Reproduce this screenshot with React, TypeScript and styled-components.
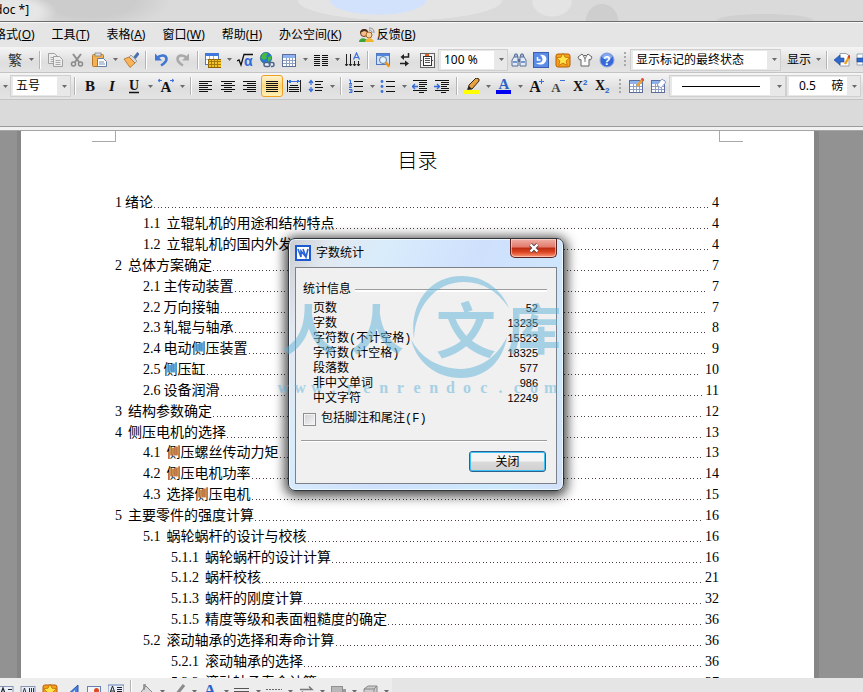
import React from 'react';
import styled, { createGlobalStyle } from 'styled-components';

const UI = '"Noto Sans", "Noto Sans CJK SC", sans-serif';
const DIALOG = '"Liberation Mono", "Noto Sans CJK SC", monospace';
const SERIF = '"Liberation Serif", "Noto Sans CJK SC", serif';

const GlobalStyle = createGlobalStyle`
  * { box-sizing: border-box; }
  body { margin: 0; overflow: hidden; background: #929292; }
  button, input, select { font: inherit; color: inherit; margin: 0; }
`;

const Shell = styled.div`
  display: flex;
  flex-direction: column;
  height: 100vh;
  overflow: hidden;
  font-family: ${UI};
  font-size: 12px;
  color: #000;
  background: #e5e5e5;
`;

const TitleBar = styled.header`
  flex: none;
  height: 22px;
  line-height: 20px;
  border-bottom: 1px solid #6c6c6c;
  white-space: nowrap;
  background:
    radial-gradient(ellipse 45px 18px at 12px 12px, #e6e6e6 60%, transparent 100%),
    radial-gradient(ellipse 56px 17px at 378px 0, #d2e2fd 84%, transparent 88%),
    radial-gradient(ellipse 110px 22px at 400px 0, #e4e4e4 92%, transparent 94%),
    radial-gradient(ellipse 24px 20px at 552px 0, #e4e4e4 80%, transparent 86%),
    radial-gradient(ellipse 20px 22px at 602px 22px, #cecece 80%, transparent 84%),
    radial-gradient(ellipse 56px 7px at 765px 20px, #d0d0d0 80%, transparent 90%),
    radial-gradient(ellipse 90px 34px at 90px 0, #cccccc 50%, transparent 90%),
    #dadada;
`;

const WindowTitle = styled.span`
  margin-left: -5px;
`;

const MenuBar = styled.nav`
  flex: none;
  display: flex;
  align-items: center;
  gap: 17px;
  height: 25px;
  margin-left: -6px;
  border-top: 1px solid #f8f8f8;
  background: #e5e5e5;
`;

const MenuItem = styled.button`
  display: flex;
  align-items: center;
  gap: 2px;
  padding: 0;
  border: 0;
  background: none;
  line-height: 20px;
  white-space: nowrap;
`;

const Bar = styled.div`
  flex: none;
  display: flex;
  align-items: center;
  height: 27px;
  overflow: hidden;
  border-bottom: 1px solid #c4c4c4;
  background: linear-gradient(#f5f5f5, #eaeaea 30%, #dedede 60%, #e4e4e4);
`;

const StandardBar = styled(Bar)`
  height: 26px;
  padding-left: 4px;
`;

const IconButton = styled.button<{ $on?: boolean }>`
  flex: none;
  display: flex;
  align-items: center;
  justify-content: center;
  width: 22px;
  height: 22px;
  padding: 0;
  border: ${(p) => (p.$on ? '1px solid #f0a020' : '0')};
  border-radius: 3px;
  background: ${(p) => (p.$on ? 'linear-gradient(#fff3d0, #fbd77c 50%, #fff0b8)' : 'none')};
`;

const ArrowButton = styled.button`
  flex: none;
  display: flex;
  align-items: center;
  justify-content: center;
  width: 10px;
  height: 22px;
  padding: 0;
  border: 0;
  background: none;
`;

const Separator = styled.span`
  flex: none;
  width: 2px;
  height: 18px;
  margin: 0 3px;
  border-left: 1px solid #b4b4b4;
  border-right: 1px solid #fff;
`;

const Grip = styled.span`
  flex: none;
  width: 2px;
  height: 15px;
  margin: 0 4px 0 6px;
  background: repeating-linear-gradient(#a8a8a8 0 2px, transparent 2px 4px);
`;

const ComboFrame = styled.label<{ $width: number }>`
  flex: none;
  display: flex;
  align-items: center;
  justify-content: space-between;
  width: ${(p) => p.$width}px;
  height: 22px;
  padding: 0 1px 0 2px;
  border: 1px solid #cfcfcf;
  background: #e8e8e8;
`;

const ComboSelect = styled.select`
  flex: 1;
  min-width: 0;
  height: 18px;
  margin-right: 2px;
  padding: 0 0 0 3px;
  border: 0;
  border-radius: 0;
  appearance: none;
  background: #fff;
  line-height: 18px;
  outline: 0;
`;

const WidthSelect = styled(ComboSelect)`
  padding-left: 10px;
`;

const LineSample = styled.button`
  flex: 1;
  display: flex;
  align-items: center;
  height: 18px;
  margin-right: 4px;
  padding: 0 10px;
  border: 0;
  background: #fff;

  &::before {
    content: '';
    flex: 1;
    height: 1px;
    background: #000;
  }
`;

const TextButton = styled.button`
  flex: none;
  height: 22px;
  padding: 0 2px 0 6px;
  border: 0;
  background: none;
  line-height: 22px;
`;

const Ribbon = styled.div`
  flex: none;
  height: 31px;
  border-bottom: 1px solid #a4a4a4;
  background: linear-gradient(#dadada 26px, #9b9b9b 26px 27px, #f2f2f2 27px);
`;

const Workspace = styled.main`
  flex: 1;
  min-height: 0;
  overflow: hidden;
  background: #929292;
`;

const Page = styled.article`
  min-height: 100%;
  margin: 0 49px 0 21px;
  background: #fff;
  box-shadow: 5px 0 #868686, -4px 0 #868686;
  font-family: ${SERIF};
`;

const MarginMarks = styled.div`
  display: flex;
  justify-content: space-between;
  padding: 0 71px;
`;

const Mark = styled.span<{ $side: 'left' | 'right' }>`
  width: 24px;
  height: 11px;
  border-bottom: 1px solid #a9a9a9;
  border-${(p) => (p.$side === 'left' ? 'right' : 'left')}: 1px solid #a9a9a9;
`;

const Heading = styled.h1`
  margin: 4px 0 17px;
  font-size: 20px;
  font-weight: 300;
  line-height: 30px;
  text-align: center;
`;

const Contents = styled.ol`
  display: grid;
  min-height: 500px;
  margin: 0;
  padding: 0 95px 0 94px;
  list-style: none;
  font-size: 14px;
  line-height: 20px;
`;

const Entry = styled.li<{ $level: number }>`
  display: flex;
  align-items: center;
  padding-left: ${(p) => p.$level * 28}px;
  white-space: nowrap;
`;

const EntryNumber = styled.span<{ $tight?: boolean }>`
  margin-right: ${(p) => (p.$tight ? 3 : 6)}px;
`;

const Leader = styled.span`
  flex: 1;
  height: 1px;
  margin: 9px 4px 0 1px;
  background: repeating-linear-gradient(90deg, #4a3a44 0 1px, transparent 1px 4px, #4a3a44 4px 5px, transparent 5px 7px);
`;

const DrawingBar = styled.footer`
  flex: none;
  display: flex;
  align-items: flex-start;
  height: 14px;
  padding-top: 2px;
  overflow: hidden;
  background: linear-gradient(90deg, #ededed 392px, #e5e5e5 392px);
`;

const DrawingTools = styled.div`
  display: flex;
  margin-left: -5px;
`;

const Dialog = styled.section`
  position: absolute;
  left: 288px;
  top: 238px;
  width: 276px;
  padding: 0 6px 6px;
  border: 1px solid #30363c;
  border-radius: 7px;
  background: linear-gradient(115deg, #c9cdd2 0, #e2e8f0 40px, #d9ecfb 90px, #cfe0fd 180px, #cdeafd 300px, #d4e0fb);
  box-shadow: inset 0 0 0 1px #eef8ff, 0 2px 12px 3px rgba(0, 0, 0, 0.75);
  font-family: ${DIALOG};
`;

const DialogTitle = styled.header`
  display: flex;
  align-items: flex-start;
  height: 28px;
`;

const DialogName = styled.h2`
  flex: 1;
  margin: 0;
  padding: 4px 0 0 5px;
  font-family: ${UI};
  font-size: 12px;
  font-weight: 400;
  line-height: 20px;
`;

const LogoBox = styled.span`
  display: flex;
  padding-top: 6px;
`;

const CloseX = styled.button`
  display: flex;
  align-items: center;
  justify-content: center;
  width: 47px;
  height: 19px;
  padding: 0;
  border: 1px solid #5c2420;
  border-top: 0;
  border-radius: 0 0 5px 5px;
  background: linear-gradient(#f0b0a6, #e27a6c 45%, #bb2c12 50%, #dc4420 72%, #fb9a7c);
  box-shadow: inset 0 0 0 1px rgba(255, 220, 210, 0.6);
`;

const DialogBody = styled.div`
  height: 217px;
  padding: 13px 9px 0 5px;
  border: 1px solid #7d8187;
  background: #f0f0f0;
`;

const GroupTitle = styled.div`
  display: flex;
  align-items: center;
  gap: 4px;
  padding-left: 2px;
  line-height: 18px;

  &::after {
    content: '';
    flex: 1;
    height: 2px;
    border-top: 1px solid #9c9c9c;
    background: #fff;
  }
`;

const Stats = styled.dl`
  margin: 3px 0 0;
  padding: 0 9px 0 12px;
`;

const Stat = styled.div`
  display: flex;
  justify-content: space-between;
  height: 15px;
  line-height: 15px;
`;

const StatValue = styled.dd`
  margin: 0;
  font-family: "Liberation Sans", sans-serif;
  font-size: 11px;
  line-height: 13px;
`;

const CheckRow = styled.label`
  display: flex;
  align-items: center;
  gap: 5px;
  margin-top: 3px;
  padding-left: 2px;
  line-height: 18px;
`;

const CheckBox = styled.input`
  width: 13px;
  height: 13px;
  border: 1px solid #8e8f8f;
  appearance: none;
  background: linear-gradient(135deg, #cdd0d2, #f6f6f6);
  box-shadow: inset 0 0 0 1px #f4f4f4;
`;

const DialogFooter = styled.div`
  display: flex;
  justify-content: flex-end;
  margin-top: 12px;
  padding: 10px 1px 0 0;
  border-top: 1px solid #9c9c9c;
  box-shadow: inset 0 1px #fff;
`;

const PushButton = styled.button`
  display: flex;
  align-items: center;
  justify-content: center;
  width: 77px;
  height: 21px;
  padding: 0;
  border: 1px solid #2c628b;
  border-radius: 3px;
  background: linear-gradient(#f4f4f4 48%, #dadada 52%, #d0d0d0);
  box-shadow: inset 0 0 0 1px #3fc1f5;
  font-family: ${UI};
  line-height: 20px;
`;

const Watermark = styled.div`
  position: absolute;
  left: -14px;
  top: 36px;
  width: 284px;
  color: #5fb3da;
  opacity: 0.5;
  pointer-events: none;
`;

const Brand = styled.div`
  display: grid;
  grid-template-columns: 68px 68px 98px 50px;
  align-items: center;
  justify-items: center;
  height: 104px;
  font-family: "Noto Sans CJK SC", sans-serif;
  font-weight: 700;
`;

const BrandMark = styled.span<{ $size: number }>`
  font-size: ${(p) => p.$size}px;
  line-height: 60px;
`;

const Emblem = styled.span`
  display: grid;
  align-items: center;
  justify-items: center;

  & > * {
    grid-area: 1 / 1;
  }

  & > span {
    padding-left: 12px;
  }
`;

const Site = styled.div`
  display: grid;
  grid-template-columns: repeat(17, 1fr);
  font-family: "Liberation Serif", serif;
  font-size: 16px;
  font-weight: 700;
  line-height: 18px;
  text-align: center;
`;

/* ---------- drawings ---------- */

const Svg = ({ children, crisp, w = 16 }: { children: React.ReactNode; crisp?: boolean; w?: number }) => (
  <svg width={w} height={16} viewBox={`0 0 ${w} 16`} fill="none" aria-hidden="true" shapeRendering={crisp ? 'crispEdges' : undefined}>
    {children}
  </svg>
);

const Caret = () => (
  <svg width="5" height="3" viewBox="0 0 5 3" aria-hidden="true">
    <path d="M0 0h5L2.5 3z" fill="#6a6a6a" />
  </svg>
);

const Lines = ({ rows, color = '#111' }: { rows: number[][]; color?: string }) => (
  <>{rows.map(([x, y, n], i) => <rect key={i} x={x} y={y} width={n} height={1} fill={color} />)}</>
);

const Align = ({ rows }: { rows: number[][] }) => <Svg crisp><Lines rows={rows} /></Svg>;

const Sheet = ({ x, y }: { x: number; y: number }) => (
  <g>
    <path d={`M${x} ${y}h6l3 3v7h-9z`} fill="#eee" stroke="#a0a0a0" />
    <path d={`M${x + 2} ${y + 4}h5M${x + 2} ${y + 6}h5M${x + 2} ${y + 8}h5`} stroke="#a8a8a8" />
  </g>
);

const TableGrid = () => (
  <g>
    <rect x="1.5" y="2.5" width="13" height="12" fill="#fff" stroke="#5c6f9c" />
    <rect x="2" y="3" width="12" height="3" fill="#8db2f0" />
    <path d="M2 8.5h12M2 11.5h12M5.5 6v8M8.5 6v8M11.5 6v8" stroke="#8fa0c0" />
  </g>
);

const Star = () => (
  <Svg>
    <rect x="1" y="2" width="14" height="13" rx="2" fill="#f4a11c" stroke="#b85c08" />
    <path d="M8 1l2 4.2 4.5.5-3.3 3.1 1 4.6L8 11.1l-4.2 2.3 1-4.6L1.5 5.7 6 5.2z" fill="#ffe34a" stroke="#c46a0a" strokeWidth=".8" />
  </Svg>
);

const Globe = () => (
  <Svg>
    <circle cx="7" cy="6" r="5.7" fill="#2878d8" stroke="#155" strokeWidth=".5" />
    <path d="M3 3c2-3 5-2 6-1L7 4l1 2-3 2-3-2zM9 5l3-1v3l-3 3z" fill="#45bd3c" />
    <path d="M5 12.5a2 2 0 0 1 2-2h2a2 2 0 0 1 0 4H7a2 2 0 0 1-2-2zM10 12.5a2 2 0 0 1 2-2h1a2 2 0 0 1 0 4h-1" stroke="#4f6787" strokeWidth="1.5" fill="#eef" />
  </Svg>
);

const Undo = ({ color, flip }: { color: string; flip?: boolean }) => (
  <Svg>
    <g transform={flip ? 'matrix(-1 0 0 1 16 0)' : undefined}>
      <path d="M4 6c4-4 9.500-3 9.500 1 0 3-3 5-5.500 6.500" stroke={color} strokeWidth="2.6" />
      <path d="M2 1.500v7h7z" fill={color} />
    </g>
  </Svg>
);

const Letter = ({ t, x = 8, y = 13, size = 15, color = '#111', italic, bold = true }: {
  t: string; x?: number; y?: number; size?: number; color?: string; italic?: boolean; bold?: boolean;
}) => (
  <text x={x} y={y} textAnchor="middle" fontFamily="Liberation Serif, serif" fontSize={size} fontWeight={bold ? 700 : 400}
    fontStyle={italic ? 'italic' : undefined} fill={color}>{t}</text>
);

const full = [3, 5, 7, 9, 11, 13];

const indentRows = [[1, 2, 14], [7, 4, 8], [7, 6, 8], [7, 8, 6], [7, 10, 8], [1, 12, 14], [7, 14, 5]];

const icons: Record<string, React.ReactNode> = {
  繁体: <Svg><text x="8" y="13" textAnchor="middle" fontFamily="Noto Sans CJK SC" fontSize="14" fill="#333">繁</text></Svg>,
  复制: <Svg><Sheet x={1.5} y={1.5} /><Sheet x={6.5} y={4.5} /></Svg>,
  剪切: <Svg><path d="M4 2l6 8M12 2l-6 8" stroke="#8e8e8e" strokeWidth="2" /><circle cx="4.500" cy="12" r="2" stroke="#8a8a8a" strokeWidth="1.500" /><circle cx="11.500" cy="12" r="2" stroke="#8a8a8a" strokeWidth="1.500" /></Svg>,
  粘贴: <Svg><rect x="1.500" y="2.500" width="11" height="12" rx="1" fill="#f4b254" stroke="#b87826" /><rect x="4" y="1" width="6" height="3" fill="#ddd" stroke="#777" strokeWidth=".7" /><path d="M6.500 6.500h6l3 3v5h-9z" fill="#fff" stroke="#6880a0" /><path d="M8 10h5M8 12h6" stroke="#7890b8" /></Svg>,
  格式刷: <Svg><path d="M15.500 1l-4 5" stroke="#4a6fae" strokeWidth="3" /><path d="M8 3l6 6-2 2-6-6z" fill="#d8d8d8" stroke="#888" strokeWidth=".7" /><path d="M6 5l6 6-5 4.500L1 7z" fill="#f7b45a" stroke="#a96320" strokeWidth=".7" /></Svg>,
  撤消: <Undo color="#3f77d2" />,
  恢复: <Undo color="#a9a9a9" flip />,
  表格和边框: <Svg crisp><rect x="0" y="1" width="13" height="11" fill="#fff" stroke="#4c7bd0" /><rect x="0" y="1" width="13" height="3" fill="#3f78dd" /><path d="M1 7.500h11M4.500 4v8M8.500 4v8" stroke="#9ab5e6" /><rect x="3" y="7" width="13" height="8" fill="#f2c230" stroke="#8a6200" /><path d="M3 9.500h13M3 12.500h13M6.500 7v8M9.500 7v8M12.500 7v8" stroke="#a67c08" /></Svg>,
  公式: <Svg><path d="M0 9l2-1 2 5L7 2.500h9" stroke="#111" strokeWidth="1.300" /><text x="7" y="14" fontFamily="Liberation Sans" fontSize="14" fontWeight="700" fill="#2c6bdc">α</text></Svg>,
  超链接: <Globe />,
  表格: <Svg crisp><TableGrid /></Svg>,
  分栏: <Svg crisp><Lines rows={[3, 5, 7, 9, 11, 13].flatMap((y) => [[1, y, 6], [9, y, 6]])} /></Svg>,
  文字方向: <Svg><path d="M1.500 2v12M5.500 2v12M9.500 9v5M13.500 9v5M0 12l1.500 2L3 12M4 12l1.500 2L7 12M8 12l1.500 2 1.500-2M12 12l1.500 2 1.500-2" stroke="#222" /><path d="M8.500 7.500L11.500 1l3 6.500M10 5.500h3.500" stroke="#3b70dc" strokeWidth="1.200" /></Svg>,
  显示比例: <Svg><rect x="1.500" y="1.500" width="13" height="11" fill="#cfe0fa" stroke="#5079c0" /><rect x="2" y="2" width="12" height="2" fill="#5487dc" /><circle cx="8" cy="8" r="3.500" fill="#e4f4ff" stroke="#60809c" /><path d="M10.500 10.500l4 4" stroke="#ec951c" strokeWidth="2.500" /></Svg>,
  段落标记: <Svg><path d="M11.500 1v4H5" stroke="#222" strokeWidth="1.500" /><path d="M7 2v6L3.500 5z" fill="#222" /><path d="M3 11.500h6" stroke="#222" strokeWidth="1.500" /><path d="M8 8.500v6l4-3z" fill="#222" /></Svg>,
  页面设置: <Svg crisp><rect x="1" y="1" width="14" height="14" fill="#f0f0f0" stroke="#666" /><rect x="4" y="4" width="8" height="9" fill="#fff" stroke="#333" /><path d="M6 6.500h5M6 8.500h5M6 10.500h5M2 8h1M13 8h1" stroke="#555" /><path d="M6 2.500h4" stroke="#e45c20" strokeWidth="2" /></Svg>,
  查找: <Svg><path d="M3 5l1-3h2l1 3M9 5l1-3h2l1 3" fill="#9cb7e6" stroke="#5a6f92" /><path d="M1 14V8l2-3h4v9zM15 14V8l-2-3H9v9z" fill="#e3ebf8" stroke="#5a6f92" /><path d="M7 7h2v3H7z" fill="#5a6f92" /><path d="M2 10h4M10 10h4" stroke="#7698cf" strokeWidth="2" /></Svg>,
  词典: <Svg><rect x=".5" y=".5" width="15" height="15" fill="#5a8ce8" stroke="#3a5fb0" /><path d="M7 3c5-1 8 3 5.500 7C11 13 6 13.500 3 11c3 0 6.500-.5 6.500-3.500C9.500 5.500 8.500 4 7 3z" fill="#fff" /><path d="M4.500 5v3h3" stroke="#fff" strokeWidth="1.500" /></Svg>,
  素材库: <Star />,
  皮肤: <Svg><path d="M5 2L1 5l1.500 3L4 7.500V14h8V7.500L13.500 8 15 5l-4-3-1.500 1.500h-3z" fill="#fafafa" stroke="#666" /><path d="M6 3l2 4 2-4M8 7v3" stroke="#777" /></Svg>,
  帮助: <Svg><circle cx="8" cy="8" r="7" fill="#3568d8" stroke="#8aa4dc" /><ellipse cx="8" cy="4.500" rx="5" ry="3" fill="#86aaf2" /><text x="8" y="12.500" textAnchor="middle" fontFamily="Liberation Sans" fontWeight="700" fontSize="12" fill="#fff">?</text></Svg>,
  上一处: <Svg><path d="M6 1.500h6l3 2V14H6z" fill="#fff" stroke="#9aa5b4" /><path d="M0 8l6-5v3h4v4H6v3z" fill="#2f68cf" stroke="#1a438f" strokeWidth=".6" /><path d="M15 5l-4 7" stroke="#f0a020" strokeWidth="2.500" /><path d="M16 3.500L14.500 6" stroke="#d84020" strokeWidth="2.500" /></Svg>,
  下一处: <Svg><path d="M1 2h8v11H1z" fill="#fff" stroke="#9aa5b4" /><path d="M13 8L7 3v3H1v4h6v3z" fill="#2f68cf" stroke="#1a438f" strokeWidth=".6" /></Svg>,
  加粗: <Svg><Letter t="B" /></Svg>,
  倾斜: <Svg><Letter t="I" italic /></Svg>,
  下划线: <Svg><Letter t="U" y={12} size={14} /><path d="M3 14.500h10" stroke="#111" strokeWidth="1.500" /></Svg>,
  字符缩放: <Svg><Letter t="A" y={14} size={15} /><path d="M0 2.500h4M12 2.500h4M2 1L0 2.500 2 4M14 1l2 1.500L14 4" stroke="#3b70dc" /></Svg>,
  左对齐: <Align rows={full.map((y, i) => [1, y, i % 2 ? 9 : 13])} />,
  居中: <Align rows={full.map((y, i) => (i % 2 ? [4, y, 8] : [1, y, 14]))} />,
  右对齐: <Align rows={full.map((y, i) => (i % 2 ? [5, y, 9] : [1, y, 13]))} />,
  两端对齐: <Align rows={full.map((y) => [2, y, 12])} />,
  分散对齐: <Svg crisp><rect x="1" y="2" width="1" height="12" fill="#222" /><rect x="14" y="2" width="1" height="12" fill="#222" /><Lines rows={[[4, 7, 8], [3, 9, 10], [3, 11, 10], [3, 13, 10]]} /><path d="M3 3.500h10M5 2L3 3.500 5 5M11 2l2 1.500L11 5" stroke="#3b70dc" /></Svg>,
  行距: <Svg><path d="M3 3v4M3 9v4M1 5l2-2.500L5 5M1 11l2 2.500L5 11" stroke="#3b70dc" strokeWidth="1.300" /><g shapeRendering="crispEdges"><Lines rows={[[7, 3, 8], [7, 6, 6], [7, 9, 8], [7, 12, 7]]} /></g></Svg>,
  编号: <Svg><g shapeRendering="crispEdges"><Lines rows={[[6, 3, 9], [6, 8, 9], [6, 13, 9]]} /></g><path d="M1 2h1.500v3M1 5.500h3M1 7h3L1 9.500h3M1 11.500h3v3H1M2 13h2" stroke="#3b70dc" /></Svg>,
  项目符号: <Svg><g shapeRendering="crispEdges"><Lines rows={[[6, 3, 9], [6, 8, 9], [6, 13, 9]]} /></g><circle cx="2" cy="3.500" r="1.400" fill="#3b70dc" /><circle cx="2" cy="8.500" r="1.400" fill="#3b70dc" /><circle cx="2" cy="13.500" r="1.400" fill="#3b70dc" /></Svg>,
  减少缩进: <Svg><g shapeRendering="crispEdges"><Lines rows={indentRows} /></g><path d="M0 8.500h6M3 6L.5 8.500 3 11" stroke="#2f66d8" strokeWidth="1.300" /></Svg>,
  增加缩进: <Svg><g shapeRendering="crispEdges"><Lines rows={indentRows} /></g><path d="M0 8.500h6M3 6l2.500 2.500L3 11" stroke="#2f66d8" strokeWidth="1.300" /></Svg>,
  突出显示: <Svg><rect x="0" y="12" width="16" height="4" fill="#ffff00" /><path d="M4 11l1-4 7-7 3 1v2l-7 8z" fill="#e9a040" stroke="#3a2a18" /><path d="M3 12l2-4 3 3z" fill="#222" /></Svg>,
  字体颜色: <Svg><Letter t="A" y={11} size={15} color="#2c62c8" /><rect x="0" y="12" width="15" height="4" fill="#0000f0" /></Svg>,
  增大字号: <Svg><Letter t="A" x={7} y={14} size={16} /><path d="M11 3.500h5M13.500 1v5" stroke="#3b70dc" /></Svg>,
  减小字号: <Svg><Letter t="A" x={6} y={14} size={13} color="#444" /><path d="M10 2.500h5" stroke="#3b70dc" /></Svg>,
  上标: <Svg><Letter t="X" x={6} y={13} size={14} /><text x="11" y="7" fontFamily="Liberation Sans" fontSize="8" fontWeight="700" fill="#2c62c8">2</text></Svg>,
  下标: <Svg><Letter t="X" x={6} y={12} size={14} /><text x="11" y="15" fontFamily="Liberation Sans" fontSize="8" fontWeight="700" fill="#2c62c8">2</text></Svg>,
  绘制表格: <Svg><TableGrid /><path d="M15 1L9 8" stroke="#f0a030" strokeWidth="2.500" /><path d="M15.500.5L14 2.500" stroke="#e0503c" strokeWidth="3" /></Svg>,
  擦除: <Svg><TableGrid /><path d="M12 1l4 3-5 6-4-3z" fill="#fff" stroke="#8aa0c8" /></Svg>,
  文本框: <Svg><rect x="0" y="3.500" width="15" height="12" fill="#e8eefa" stroke="#8a96b0" /><path d="M2 13l3-8 3 8M3 10h4M10 6.500h4M10 9.500h4M3 14.500h11" stroke="#222" strokeWidth="1.200" /></Svg>,
  竖排文本框: <Svg><rect x="1" y="3.500" width="14" height="12" fill="#e8eefa" stroke="#8a96b0" /><path d="M2 13l2.500-8L7 13M3 10h3M9.500 5v9M11.500 5v9M13.500 5v9" stroke="#333" /></Svg>,
  艺术字: <Svg><path d="M1 14L14 2v13l-4-2-9 2z" fill="#4a80e0" stroke="#2a55a8" /><path d="M6 12l5-5v4z" fill="#dfeafd" /></Svg>,
  图片: <Svg><rect x="1.500" y="3.500" width="13" height="12" fill="#f2f4fa" stroke="#6480b4" /><circle cx="10.500" cy="7.500" r="2.500" fill="#e04a20" /><path d="M2 15l4-5 5 6z" fill="#5484d8" /></Svg>,
  图文框: <Svg><rect x="0" y="2" width="16" height="14" fill="#e8eefa" stroke="#6480b4" /><path d="M2 10l2.500-7L7 10M3 8h3M9 4.500h5M9 6.500h5M9 8.500h5M2 12.500h10" stroke="#222" /></Svg>,
  填充颜色: <Svg><path d="M3 9l5-6 6 6-6 6z" fill="#d8d8d8" stroke="#858585" /><path d="M6 7V2h2" stroke="#858585" strokeWidth="1.500" /></Svg>,
  线条颜色: <Svg><path d="M14 2L6 12" stroke="#8a8a8a" strokeWidth="3" /><path d="M8 9l-6 6h4l4-4z" fill="#aaa" /></Svg>,
  文字颜色: <Svg><Letter t="A" y={13} size={17} color="#2c62c8" /></Svg>,
  线型: <Svg crisp><path d="M0 5.500h15M0 12h15" stroke="#555" /><path d="M0 8.500h15" stroke="#555" strokeWidth="2" /></Svg>,
  虚线线型: <Svg crisp><path d="M0 6.500h16M0 9.500h16" stroke="#666" strokeDasharray="2 1" /></Svg>,
  箭头样式: <Svg><path d="M2 6.500h12l-3-3M14 11.500H2l3-3" stroke="#777" strokeWidth="1.500" /></Svg>,
  阴影: <Svg><rect x="4" y="6" width="12" height="10" fill="#999" /><rect x="1.500" y="3.500" width="11" height="10" fill="#b8b8b8" stroke="#909090" /></Svg>,
  三维效果: <Svg><path d="M2 6l4-3h9v9l-3 3H2z" fill="#ccc" stroke="#888" /><path d="M2 6h10v9M12 6l3-3" stroke="#888" /></Svg>,
};

const Tool = ({ name, on }: { name: string; on?: boolean }) => (
  <IconButton type="button" aria-label={name} aria-pressed={on} $on={on}>{icons[name]}</IconButton>
);

const Drop = ({ name }: { name: string }) => (
  <ArrowButton type="button" aria-label={`${name}选项`}><Caret /></ArrowButton>
);

/* "|" is a separator, ":" a grip, a trailing "+" adds a drop-down arrow, a trailing "*" marks the pressed tool */
const Tools = ({ list }: { list: string }) => (
  <>
    {list.split(' ').map((item, i) => {
      if (item === '|') return <Separator key={i} />;
      if (item === ':') return <Grip key={i} />;
      const name = item.replace(/[+*]$/, '');
      return (
        <React.Fragment key={i}>
          <Tool name={name} on={item.endsWith('*')} />
          {item.endsWith('+') && <Drop name={name} />}
        </React.Fragment>
      );
    })}
  </>
);

const Combo = ({ label, value, width }: { label: string; value: string; width: number }) => (
  <ComboFrame $width={width}>
    <ComboSelect aria-label={label}><option>{value}</option></ComboSelect>
    <ArrowButton as="span"><Caret /></ArrowButton>
  </ComboFrame>
);

const FeedbackIcon = () => (
  <Svg>
    <circle cx="5" cy="6" r="3.500" fill="#f3c08c" stroke="#6a3a18" /><path d="M1 6c0-5 8-5 8-1L5 4z" fill="#4a2c18" />
    <circle cx="10" cy="8" r="3" fill="#f9d3a4" stroke="#a86424" /><path d="M0 15c0-5 8-5 9 0z" fill="#3da43c" /><path d="M6 15c1-5 8-5 9 0z" fill="#f3b42c" />
    <path d="M10 3c2 0 3 1 3 3M10 1c4 0 5 2 5 5" stroke="#888" />
  </Svg>
);

const WpsLogo = () => (
  <svg width="16" height="16" viewBox="0 0 16 16" aria-hidden="true">
    <rect x="1" y="1" width="14" height="14" fill="#fff" stroke="#1c5ad4" strokeWidth="2" />
    <path d="M3 4l3 8V6l5 6M8 4l3 8 2-8" fill="none" stroke="#2a62d8" strokeWidth="1.600" />
  </svg>
);

const CloseGlyph = () => (
  <svg width="12" height="10" viewBox="0 0 12 10" aria-hidden="true">
    <path d="M2.500 1.500l7 7M9.500 1.500l-7 7" stroke="#5c4444" strokeWidth="4" />
    <path d="M2.500 1.500l7 7M9.500 1.500l-7 7" stroke="#fff" strokeWidth="2.400" />
  </svg>
);

const Ring = () => (
  <svg width="98" height="104" viewBox="140 8 98 104" aria-hidden="true">
    <path d="M143 72C138 40 156 9 191 9c24 0 40 15 47 32-12-17-26-26-45-26-30 0-49 26-50 57z" fill="currentColor" />
    <path d="M140 72c5 22 24 39 50 39s42-18 46-41c-11 21-26 31-46 32-24-1-41-12-50-30z" fill="currentColor" />
  </svg>
);

/* ---------- data ---------- */

const menus: [string, string][] = [['格式', 'O'], ['工具', 'T'], ['表格', 'A'], ['窗口', 'W'], ['帮助', 'H'], ['办公空间', 'K'], ['反馈', 'B']];

const toc: [number, string, string, number, boolean?][] = [
  [0, '1', '绪论', 4, true],
  [1, '1.1', '立辊轧机的用途和结构特点', 4],
  [1, '1.2', '立辊轧机的国内外发展', 4],
  [0, '2', '总体方案确定', 7],
  [1, '2.1', '主传动装置', 7, true],
  [1, '2.2', '万向接轴', 7, true],
  [1, '2.3', '轧辊与轴承', 8, true],
  [1, '2.4', '电动侧压装置', 9, true],
  [1, '2.5', '侧压缸', 10, true],
  [1, '2.6', '设备润滑', 11, true],
  [0, '3', '结构参数确定', 12],
  [0, '4', '侧压电机的选择', 13],
  [1, '4.1', '侧压螺丝传动力矩', 13],
  [1, '4.2', '侧压电机功率', 14],
  [1, '4.3', '选择侧压电机', 15],
  [0, '5', '主要零件的强度计算', 16],
  [1, '5.1', '蜗轮蜗杆的设计与校核', 16],
  [2, '5.1.1', '蜗轮蜗杆的设计计算', 16],
  [2, '5.1.2', '蜗杆校核', 21],
  [2, '5.1.3', '蜗杆的刚度计算', 32],
  [2, '5.1.5', '精度等级和表面粗糙度的确定', 36],
  [1, '5.2', '滚动轴承的选择和寿命计算', 36],
  [2, '5.2.1', '滚动轴承的选择', 36],
  [2, '5.2.2', '滚动轴承寿命计算', 37],
];

const stats: [string, number][] = [
  ['页数', 52], ['字数', 13235], ['字符数(不计空格)', 15523], ['字符数(计空格)', 18325],
  ['段落数', 577], ['非中文单词', 986], ['中文字符', 12249],
];

export default function App() {
  return (
    <Shell>
      <GlobalStyle />
      <TitleBar><WindowTitle>doc *]</WindowTitle></TitleBar>
      <MenuBar>
        {menus.map(([name, key]) => (
          <MenuItem type="button" key={key}>
            {key === 'B' && <FeedbackIcon />}
            <span>{name}(<u>{key}</u>)</span>
          </MenuItem>
        ))}
      </MenuBar>
      <StandardBar role="toolbar" aria-label="常用">
        <Tools list="繁体+ | 复制 剪切 粘贴+ 格式刷 | 撤消 恢复 | 表格和边框+ 公式 超链接 表格+ 分栏+ 文字方向 | 显示比例 段落标记 页面设置" />
        <Combo label="缩放" value="100 %" width={70} />
        <Tools list="查找 词典 素材库 皮肤 帮助 :" />
        <Combo label="修订状态" value="显示标记的最终状态" width={151} />
        <TextButton type="button">显示</TextButton>
        <Drop name="显示" />
        <Tools list="| 上一处 下一处" />
      </StandardBar>
      <Bar role="toolbar" aria-label="格式">
        <Drop name="字体" />
        <Combo label="字号" value="五号" width={61} />
        <Tools list="| 加粗 倾斜 下划线+ 字符缩放+ | 左对齐 居中 右对齐 两端对齐* 分散对齐 行距+ | 编号+ 项目符号+ 减少缩进 增加缩进 | 突出显示+ 字体颜色+ 增大字号 减小字号 上标 下标 : 绘制表格 擦除" />
        <ComboFrame as="div" $width={117}>
          <LineSample type="button" aria-label="线型" />
          <ArrowButton type="button" aria-label="线型选项"><Caret /></ArrowButton>
        </ComboFrame>
        <ComboFrame $width={75}>
          <WidthSelect aria-label="线宽"><option>{'0.5\u00a0\u00a0\u00a0\u00a0\u00a0磅'}</option></WidthSelect>
          <ArrowButton as="span"><Caret /></ArrowButton>
        </ComboFrame>
      </Bar>
      <Ribbon />
      <Workspace>
        <Page>
          <MarginMarks><Mark $side="left" /><Mark $side="right" /></MarginMarks>
          <Heading>目录</Heading>
          <Contents>
            {toc.map(([level, num, title, page, tight]) => (
              <Entry key={num} $level={level}>
                <EntryNumber $tight={tight}>{num}</EntryNumber>
                <span>{title}</span>
                <Leader />
                <span>{page}</span>
              </Entry>
            ))}
          </Contents>
        </Page>
      </Workspace>
      <DrawingBar role="toolbar" aria-label="绘图">
        <DrawingTools>
          <Tools list="文本框 竖排文本框 素材库 艺术字 图片 图文框 | 填充颜色+ 线条颜色+ 文字颜色+ 线型+ 虚线线型+ 箭头样式+ 阴影+ 三维效果+" />
        </DrawingTools>
      </DrawingBar>
      <Dialog role="dialog" aria-labelledby="count-title">
        <DialogTitle>
          <LogoBox><WpsLogo /></LogoBox>
          <DialogName id="count-title">字数统计</DialogName>
          <CloseX type="button" aria-label="关闭窗口"><CloseGlyph /></CloseX>
        </DialogTitle>
        <DialogBody>
          <GroupTitle>统计信息</GroupTitle>
          <Stats>
            {stats.map(([name, value]) => (
              <Stat key={name}><dt>{name}</dt><StatValue>{value}</StatValue></Stat>
            ))}
          </Stats>
          <CheckRow><CheckBox type="checkbox" />包括脚注和尾注(F)</CheckRow>
          <DialogFooter><PushButton type="button">关闭</PushButton></DialogFooter>
        </DialogBody>
        <Watermark aria-hidden="true">
          <Brand>
            <BrandMark $size={54}>人</BrandMark>
            <BrandMark $size={54}>人</BrandMark>
            <Emblem><Ring /><BrandMark $size={60}>文</BrandMark></Emblem>
            <BrandMark $size={54}>库</BrandMark>
          </Brand>
          <Site>{'www.renrendoc.com'.split('').map((c, i) => <span key={i}>{c}</span>)}</Site>
        </Watermark>
      </Dialog>
    </Shell>
  );
}
